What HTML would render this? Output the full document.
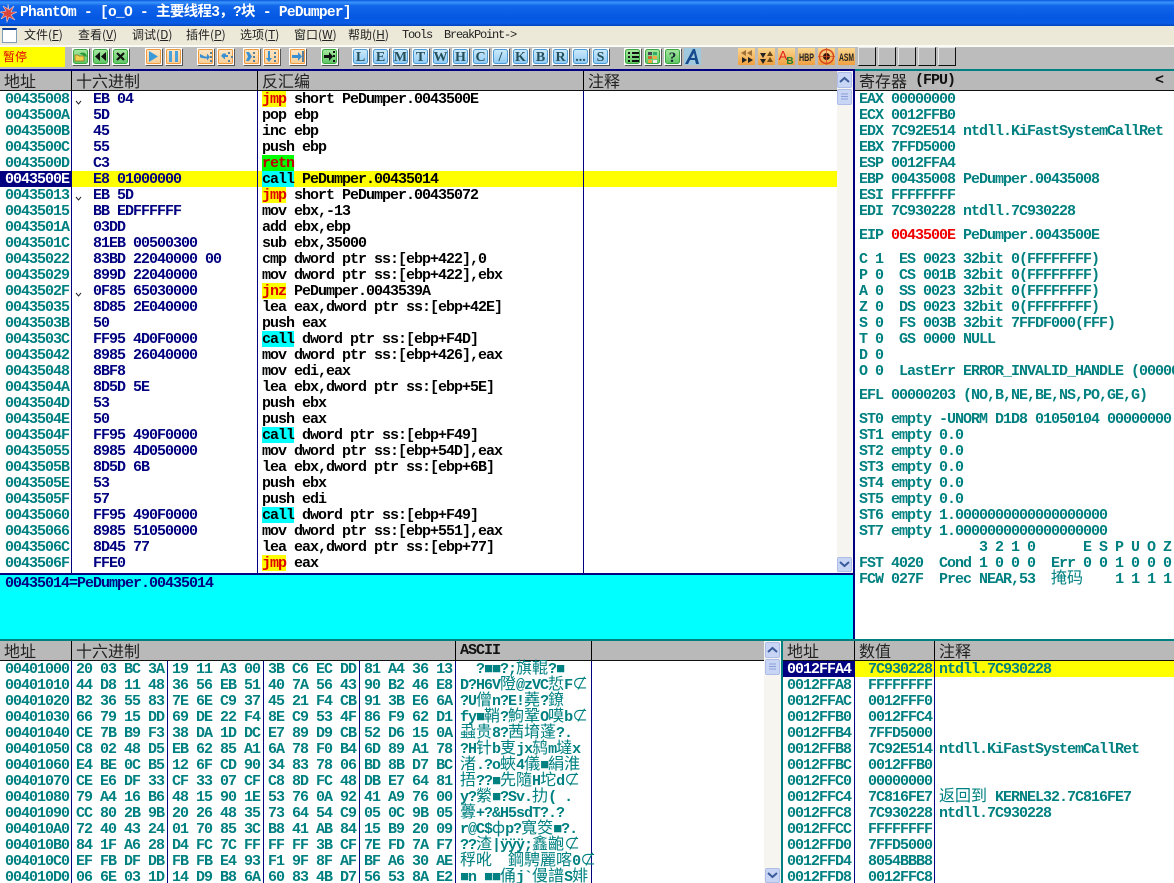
<!DOCTYPE html>
<html><head><meta charset="utf-8"><title>PhantOm</title>
<style>
html,body{margin:0;padding:0;background:#fff;}
#r{position:relative;width:1174px;height:883px;overflow:hidden;background:#fff;font-family:"Liberation Mono","Noto Sans CJK SC",monospace;}
#r div,#r pre,#r svg{position:absolute;margin:0;}
#r pre{margin-top:1px;}
pre{font:bold 15px/16px "Liberation Mono","Noto Sans CJK SC",monospace;letter-spacing:-1px;color:#008080;white-space:pre;}
pre i{font:normal 16px/0 "Noto Sans CJK SC",sans-serif;letter-spacing:0;}
.n{color:#000080}.k{color:#000}
b{display:inline-block;height:15px;line-height:16px;vertical-align:top;font-weight:bold}
.y{background:#ff0;color:#e00000;box-shadow:0 -1px #ff0}.c{background:#0ff;color:#000;box-shadow:0 -1px #0ff}.g{background:#0f0;color:#c00000;box-shadow:0 -1px #0f0}
.h{height:19px;background:#b9b9b9;}
.hd{font:400 16px/18px "Noto Sans CJK SC",sans-serif;color:#222;white-space:pre;}
.hm{font:bold 15px/20px "Liberation Mono",monospace;letter-spacing:-1px;color:#111;white-space:pre;}
.v{width:1px;background:#000080}.vk{width:1px;background:#000}
.m{font:400 12px/18px "Noto Sans CJK SC",sans-serif;color:#222;top:26px;white-space:pre;}
.ml{font:400 12px/18px "Liberation Mono",monospace;letter-spacing:-1.2px;color:#222;top:26px;white-space:pre;}
.sb{background:#c9d5f5;border:1px solid #aebde8;box-sizing:border-box;border-radius:2px;}
</style></head><body><div id="r">

<!-- title -->
<div style="left:0;top:0;width:1174px;height:26px;background:linear-gradient(#0a58e0,#3a95fb 9%,#1166ea 22%,#0357e2 70%,#0a5de6 88%,#0345bd)"></div>
<svg style="left:0;top:3px" width="18" height="20" viewBox="0 0 18 20"><path d="M8 1l1 6 5-4-3 6 6 0-6 3 4 5-6-3-2 5-1-6-5 3 3-5-4-2 6-1-3-5 5 3z" fill="#d8433a" stroke="#f6d0c8" stroke-width=".6"/></svg>
<div style="left:20px;top:4px;font:bold 14.5px/18px 'Liberation Mono','Noto Sans CJK SC',monospace;letter-spacing:-.7px;color:#fff;white-space:pre">PhantOm - [o_O - 主要线程3，?块 - PeDumper]</div>

<!-- menu -->
<div style="left:0;top:26px;width:1174px;height:19px;background:#ece9d8"></div>
<div style="left:0;top:45px;width:1174px;height:2px;background:#fbfaf5"></div>
<div style="left:2px;top:28px;width:13px;height:12px;background:#fff;border:1px solid #7f9db9;border-top:2px solid #0a3a9a"></div>
<div class="m" style="left:24px">文件(<u>F</u>)</div>
<div class="m" style="left:78px">查看(<u>V</u>)</div>
<div class="m" style="left:132px">调试(<u>D</u>)</div>
<div class="m" style="left:186px">插件(<u>P</u>)</div>
<div class="m" style="left:240px">选项(<u>T</u>)</div>
<div class="m" style="left:294px">窗口(<u>W</u>)</div>
<div class="m" style="left:348px">帮助(<u>H</u>)</div>
<div class="ml" style="left:402px">Tools</div>
<div class="ml" style="left:444px">BreakPoint-&gt;</div>

<!-- toolbar -->
<div style="left:0;top:47px;width:1174px;height:22px;background:#bcbcbc"></div>
<div style="left:0;top:47px;width:65px;height:20px;background:#ff0"></div>
<div style="left:3px;top:47px;font:400 12px/19px 'Noto Sans CJK SC',sans-serif;color:#e00000">暂停</div>
<svg style="left:0;top:44px" width="1174" height="26" viewBox="0 44 1174 26">
<defs>
<linearGradient id="gg" x1="0" y1="0" x2="0" y2="1"><stop offset="0" stop-color="#a7e7a0"/><stop offset="1" stop-color="#5fc765"/></linearGradient>
<linearGradient id="og" x1="0" y1="0" x2="0" y2="1"><stop offset="0" stop-color="#fde6c4"/><stop offset="1" stop-color="#f9cf98"/></linearGradient>
<linearGradient id="bg" x1="0" y1="0" x2="0" y2="1"><stop offset="0" stop-color="#cdeafc"/><stop offset="1" stop-color="#8fcaf2"/></linearGradient>
<linearGradient id="dg" x1="0" y1="0" x2="0" y2="1"><stop offset="0" stop-color="#fbd78f"/><stop offset="1" stop-color="#f0a040"/></linearGradient>
<g id="G"><rect x="1" y="49" width="17" height="17" fill="#555"/><rect x="0" y="48" width="17" height="17" fill="#fff"/><rect x="1.5" y="49.5" width="14" height="14" rx="2" fill="url(#gg)" stroke="#3aa83f"/></g>
<g id="O"><rect x="1" y="49" width="17" height="17" fill="#555"/><rect x="0" y="48" width="17" height="17" fill="#fff"/><rect x="1.5" y="49.5" width="14" height="14" rx="1" fill="url(#og)" stroke="#f09a40"/></g>
<g id="B"><rect x="1" y="49" width="17" height="17" fill="#555"/><rect x="0" y="48" width="17" height="17" fill="#fff"/><rect x="1.5" y="49.5" width="14" height="14" rx="2" fill="url(#bg)" stroke="#4a9ad8"/></g>
<g id="D"><rect x="0" y="48" width="17" height="17" fill="url(#dg)"/></g>
<g id="E"><path d="M.5 65V47.500H17" fill="none" stroke="#e6e6e6"/><path d="M17.500 47.500V65.500H.5" fill="none" stroke="#111"/></g>
</defs>
<use href="#G" x="72"/><use href="#G" x="92"/><use href="#G" x="112"/>
<path d="M75 61v-6h3l1 1h5v5z" fill="#f3d24a" stroke="#8a7420" stroke-width=".8"/><path d="M79 54q4-3 7 0l1 3-3-1q-2-2-5-2z" fill="#2c9a3a"/>
<path d="M100 52v9l-5-4.500zM106 52v9l-5-4.500z" fill="#111"/>
<path d="M117 53l7 7M124 53l-7 7" stroke="#111" stroke-width="2.2"/>
<use href="#O" x="145"/><use href="#O" x="165"/>
<path d="M149 51l9 5.500-9 5.500z" fill="#3a9ad8"/><path d="M169 51h3v11h-3zM175 51h3v11h-3z" fill="#4aa2dc"/>
<use href="#O" x="197"/><use href="#O" x="217"/><use href="#O" x="243"/><use href="#O" x="263"/><use href="#O" x="289"/>
<path d="M200 54l5 2.500 2 0v-3l3 3.500-3 3.500v-2l-2 0-5-1z" fill="#3a90d0"/><path d="M210 52h2v2h-2zM210 56h2v2h-2zM210 60h2v2h-2z" fill="#5a7f9a"/>
<path d="M221 56h5v-2.500l-3 0zM221 56l4 3.500v-2.500h3v-2h-3z" fill="#3a90d0"/><path d="M228 52h2v2h-2zM228 60h2v2h-2zM231 56h2v2h-2z" fill="#5a7f9a"/>
<path d="M246 52l3 0 3 4.500-3 4.500h-3l2-4.500z" fill="#3a90d0"/><path d="M253 52h2v2h-2zM253 56h2v2h-2zM253 60h2v2h-2z" fill="#5a7f9a"/>
<path d="M268 51h2v7h2l-3 4-3-4h2z" fill="#3a90d0"/><path d="M274 52h2v2h-2zM274 56h2v2h-2zM274 60h2v2h-2z" fill="#5a7f9a"/>
<path d="M292 55h6v-3l4 4.500-4 4.500v-3h-6z" fill="#3a90d0"/><path d="M302 51h2v11h-2z" fill="#5a7f9a"/>
<use href="#G" x="321"/>
<path d="M324 55h5v-3l4 4.500-4 4.500v-3h-5z" fill="#111"/><path d="M333 51h2v2h-2zM333 55h2v2h-2zM333 60h2v2h-2z" fill="#111"/>
<use href="#B" x="352"/><use href="#B" x="372"/><use href="#B" x="392"/><use href="#B" x="412"/><use href="#B" x="432"/><use href="#B" x="452"/><use href="#B" x="472"/><use href="#B" x="492"/><use href="#B" x="512"/><use href="#B" x="532"/><use href="#B" x="552"/><use href="#B" x="572"/><use href="#B" x="592"/>
<g font-family="Liberation Serif" font-weight="bold" font-size="14" fill="#24505c" text-anchor="middle">
<text x="360.500" y="61">L</text><text x="380.500" y="61">E</text><text x="400.500" y="61">M</text><text x="420.500" y="61">T</text><text x="440.500" y="61">W</text><text x="460.500" y="61">H</text><text x="480.500" y="61">C</text><text x="500.500" y="61">/</text><text x="520.500" y="61">K</text><text x="540.500" y="61">B</text><text x="560.500" y="61">R</text><text x="580.500" y="61">...</text><text x="600.500" y="61">S</text>
</g>
<use href="#G" x="624"/><use href="#G" x="644"/><use href="#G" x="664"/>
<path d="M628 52h2v2h-2zM632 52h7v2h-7zM628 56h2v2h-2zM632 56h7v2h-7zM628 60h2v2h-2zM632 60h7v2h-7z" fill="#111"/>
<rect x="648" y="52" width="4" height="3" fill="#445"/><rect x="653" y="52" width="4" height="3" fill="#3a6"/><rect x="648" y="56" width="4" height="3" fill="#c63"/><rect x="653" y="56" width="4" height="3" fill="#ea4"/><rect x="648" y="60" width="4" height="3" fill="#ea4"/><rect x="653" y="60" width="4" height="3" fill="#eee"/>
<text x="672.500" y="62" font-family="Liberation Serif" font-weight="bold" font-size="15" fill="#123" text-anchor="middle">?</text>
<rect x="684" y="48" width="17" height="17" fill="#9fc8de"/><path d="M685 64l8-15h2l4 15h-3l-1-4h-5l-2 4zM691 58h4l-1-5z" fill="#174a8c" fill-rule="evenodd"/>
<use href="#D" x="738"/><use href="#D" x="758"/><use href="#D" x="778"/><use href="#D" x="798"/><use href="#D" x="818"/><use href="#D" x="838"/>
<path d="M746 50v6l-5-3zM752 50v6l-5-3z" fill="#a0703a"/><path d="M742 57v6l5-3zM748 57v6l5-3z" fill="#222"/>
<path d="M760 53h6l-3 5zM760 59h6l-3 5z" fill="#222"/><path d="M767 56h6l-3-5zM767 62h6l-3-5z" fill="#6a4a1a"/>
<text x="783" y="60" font-family="Liberation Sans" font-size="13" fill="#e02020" text-anchor="middle">A</text><text x="790" y="64" font-family="Liberation Sans" font-size="10" font-weight="bold" fill="#208030" text-anchor="middle">B</text>
<text x="806.500" y="61" font-family="Liberation Sans" font-weight="bold" font-size="11" fill="#222" text-anchor="middle" textLength="15" lengthAdjust="spacingAndGlyphs">HBP</text>
<circle cx="826.500" cy="56.500" r="7" fill="none" stroke="#d84a20" stroke-width="1.500"/><circle cx="826.500" cy="56.500" r="3.500" fill="#301810"/><path d="M818 56.500h17M826.500 48v17" stroke="#d84a20" stroke-width=".8"/>
<text x="846.500" y="61" font-family="Liberation Sans" font-weight="bold" font-size="11" fill="#222" text-anchor="middle" textLength="15" lengthAdjust="spacingAndGlyphs">ASM</text>
<use href="#E" x="858"/><use href="#E" x="878"/><use href="#E" x="898"/><use href="#E" x="918"/><use href="#E" x="938"/>
</svg>

<!-- pane top borders -->
<div style="left:0;top:69px;width:855px;height:2px;background:#000080"></div>
<div style="left:855px;top:69px;width:319px;height:2px;background:#008080"></div>

<!-- headers top -->
<div class="h" style="left:0;top:71px;width:837px"></div>
<div class="h" style="left:855px;top:71px;width:319px"></div>
<div style="left:0;top:90px;width:1174px;height:1px;background:#111"></div>
<div class="hd" style="left:4px;top:71px">地址</div>
<div class="hd" style="left:76px;top:71px">十六进制</div>
<div class="hd" style="left:262px;top:71px">反汇编</div>
<div class="hd" style="left:588px;top:71px">注释</div>
<div class="hd" style="left:859px;top:71px">寄存器</div>
<div class="hm" style="left:915px;top:71px">(FPU)</div>
<div class="hm" style="left:1155px;top:71px">&lt;</div>
<div class="vk" style="left:71px;top:71px;height:19px"></div>
<div class="vk" style="left:257px;top:71px;height:19px"></div>
<div class="vk" style="left:583px;top:71px;height:19px"></div>

<!-- disasm -->
<div style="left:0;top:171px;width:71px;height:16px;background:#000080"></div>
<div style="left:72px;top:171px;width:765px;height:16px;background:#ff0"></div>
<div class="v" style="left:71px;top:91px;height:482px"></div>
<div class="v" style="left:257px;top:91px;height:482px"></div>
<div class="v" style="left:583px;top:91px;height:482px"></div>
<pre style="left:5px;top:91px">00435008
0043500A
0043500B
0043500C
0043500D
<span style="color:#fff">0043500E</span>
00435013
00435015
0043501A
0043501C
00435022
00435029
0043502F
00435035
0043503B
0043503C
00435042
00435048
0043504A
0043504D
0043504E
0043504F
00435055
0043505B
0043505E
0043505F
00435060
00435066
0043506C
0043506F</pre>
<pre class="n" style="left:93px;top:91px">EB 04
5D
45
55
C3
E8 01000000
EB 5D
BB EDFFFFFF
03DD
81EB 00500300
83BD 22040000 00
899D 22040000
0F85 65030000
8D85 2E040000
50
FF95 4D0F0000
8985 26040000
8BF8
8D5D 5E
53
50
FF95 490F0000
8985 4D050000
8D5D 6B
53
57
FF95 490F0000
8985 51050000
8D45 77
FFE0</pre>
<svg style="left:75px;top:100px" width="8" height="6"><path d="M1 1l2.500 3 2.500-3" fill="none" stroke="#223" /></svg>
<svg style="left:75px;top:196px" width="8" height="6"><path d="M1 1l2.500 3 2.500-3" fill="none" stroke="#223" /></svg>
<svg style="left:75px;top:292px" width="8" height="6"><path d="M1 1l2.500 3 2.500-3" fill="none" stroke="#223" /></svg>
<pre class="k" style="left:262px;top:91px"><b class="y">jmp</b> short PeDumper.0043500E
pop ebp
inc ebp
push ebp
<b class="g">retn</b>
<b class="c">call</b> PeDumper.00435014
<b class="y">jmp</b> short PeDumper.00435072
mov ebx,-13
add ebx,ebp
sub ebx,35000
cmp dword ptr ss:[ebp+422],0
mov dword ptr ss:[ebp+422],ebx
<b class="y">jnz</b> PeDumper.0043539A
lea eax,dword ptr ss:[ebp+42E]
push eax
<b class="c">call</b> dword ptr ss:[ebp+F4D]
mov dword ptr ss:[ebp+426],eax
mov edi,eax
lea ebx,dword ptr ss:[ebp+5E]
push ebx
push eax
<b class="c">call</b> dword ptr ss:[ebp+F49]
mov dword ptr ss:[ebp+54D],eax
lea ebx,dword ptr ss:[ebp+6B]
push ebx
push edi
<b class="c">call</b> dword ptr ss:[ebp+F49]
mov dword ptr ss:[ebp+551],eax
lea eax,dword ptr ss:[ebp+77]
<b class="y">jmp</b> eax</pre>

<!-- disasm scrollbar -->
<div style="left:837px;top:71px;width:16px;height:502px;background:#f6f5ef"></div>
<div class="sb" style="left:837px;top:72px;width:15px;height:16px"></div>
<div class="sb" style="left:837px;top:89px;width:15px;height:16px"></div>
<div class="sb" style="left:837px;top:557px;width:15px;height:15px"></div>
<svg style="left:837px;top:72px" width="15" height="16"><path d="M3 10l4.500-4 4.500 4" fill="none" stroke="#3a5a9a" stroke-width="2"/></svg>
<svg style="left:837px;top:89px" width="15" height="16"><path d="M4 5h7M4 7.500h7M4 10h7" stroke="#8a9fd8"/></svg>
<svg style="left:837px;top:557px" width="15" height="15"><path d="M3 5l4.500 4 4.500-4" fill="none" stroke="#3a5a9a" stroke-width="2"/></svg>
<div style="left:853px;top:69px;width:2px;height:572px;background:#000080"></div>

<!-- info pane -->
<div style="left:0;top:573px;width:854px;height:2px;background:#000080"></div>
<div style="left:0;top:575px;width:853px;height:64px;background:#0ff"></div>
<pre class="n" style="left:5px;top:575px">00435014=PeDumper.00435014</pre>

<!-- registers -->
<pre style="left:859px;top:91px">EAX 00000000
ECX 0012FFB0
EDX 7C92E514 ntdll.KiFastSystemCallRet
EBX 7FFD5000
ESP 0012FFA4
EBP 00435008 PeDumper.00435008
ESI FFFFFFFF
EDI 7C930228 ntdll.7C930228</pre>
<pre style="left:859px;top:227px">EIP <span style="color:#f00000">0043500E</span> PeDumper.0043500E</pre>
<pre style="left:859px;top:251px">C 1  ES 0023 32bit 0(FFFFFFFF)
P 0  CS 001B 32bit 0(FFFFFFFF)
A 0  SS 0023 32bit 0(FFFFFFFF)
Z 0  DS 0023 32bit 0(FFFFFFFF)
S 0  FS 003B 32bit 7FFDF000(FFF)
T 0  GS 0000 NULL
D 0
O 0  LastErr ERROR_INVALID_HANDLE (00000006)</pre>
<pre style="left:859px;top:387px">EFL 00000203 (NO,B,NE,BE,NS,PO,GE,G)</pre>
<pre style="left:859px;top:411px">ST0 empty -UNORM D1D8 01050104 00000000
ST1 empty 0.0
ST2 empty 0.0
ST3 empty 0.0
ST4 empty 0.0
ST5 empty 0.0
ST6 empty 1.0000000000000000000
ST7 empty 1.0000000000000000000
               3 2 1 0      E S P U O Z
FST 4020  Cond 1 0 0 0  Err 0 0 1 0 0 0
FCW 027F  Prec NEAR,53  <i>掩码</i>    1 1 1 1</pre>

<!-- bottom panes -->
<div style="left:0;top:639px;width:1174px;height:2px;background:#008080"></div>
<div class="h" style="left:0;top:641px;width:764px"></div>
<div class="h" style="left:783px;top:641px;width:391px"></div>
<div style="left:0;top:660px;width:1174px;height:1px;background:#111"></div>
<div class="hd" style="left:4px;top:641px">地址</div>
<div class="hd" style="left:76px;top:641px">十六进制</div>
<div class="hm" style="left:460px;top:641px">ASCII</div>
<div class="hd" style="left:787px;top:641px">地址</div>
<div class="hd" style="left:859px;top:641px">数值</div>
<div class="hd" style="left:939px;top:641px">注释</div>
<div class="vk" style="left:71px;top:641px;height:19px"></div>
<div class="vk" style="left:455px;top:641px;height:19px"></div>
<div class="vk" style="left:591px;top:641px;height:19px"></div>
<div class="vk" style="left:854px;top:641px;height:19px"></div>
<div class="vk" style="left:934px;top:641px;height:19px"></div>
<div class="v" style="left:71px;top:661px;height:222px"></div>
<div class="v" style="left:167px;top:661px;height:222px"></div>
<div class="v" style="left:263px;top:661px;height:222px"></div>
<div class="v" style="left:359px;top:661px;height:222px"></div>
<div class="v" style="left:455px;top:661px;height:222px"></div>
<div class="v" style="left:591px;top:661px;height:222px"></div>
<pre style="left:5px;top:661px">00401000
00401010
00401020
00401030
00401040
00401050
00401060
00401070
00401080
00401090
004010A0
004010B0
004010C0
004010D0</pre>
<pre style="left:76px;top:661px">20 03 BC 3A 19 11 A3 00 3B C6 EC DD 81 A4 36 13
44 D8 11 48 36 56 EB 51 40 7A 56 43 90 B2 46 E8
B2 36 55 83 7E 6E C9 37 45 21 F4 CB 91 3B E6 6A
66 79 15 DD 69 DE 22 F4 8E C9 53 4F 86 F9 62 D1
CE 7B B9 F3 38 DA 1D DC E7 89 D9 CB 52 D6 15 0A
C8 02 48 D5 EB 62 85 A1 6A 78 F0 B4 6D 89 A1 78
E4 BE 0C B5 12 6F CD 90 34 83 78 06 BD 8B D7 BC
CE E6 DF 33 CF 33 07 CF C8 8D FC 48 DB E7 64 81
79 A4 16 B6 48 15 90 1E 53 76 0A 92 41 A9 76 00
CC 80 2B 9B 20 26 48 35 73 64 54 C9 05 0C 9B 05
72 40 43 24 01 70 85 3C B8 41 AB 84 15 B9 20 09
84 1F A6 28 D4 FC 7C FF FF FF 3B CF 7E FD 7A F7
EF FB DF DB FB FB E4 93 F1 9F 8F AF BF A6 30 AE
06 6E 03 1D 14 D9 B8 6A 60 83 4B D7 56 53 8A E2</pre>
<pre style="left:460px;top:661px">  ?■■?;<i>旗輥</i>?■
D?H6V<i>隥</i>@zVC<i>悊</i>F<i>⊄</i>
?U<i>僧</i>n?E!<i>蕘</i>?<i>鐐</i>
fy■<i>鞘</i>?<i>鮈鞏</i>O<i>嗼</i>b<i>⊄</i>
<i>蝨贵</i>8?<i>茜堉蓬</i>?.
?H<i>针</i>b<i>叓</i>jx<i>鸫</i>m<i>墶</i>x
<i>渚</i>.?o<i>蛺</i>4<i>儀</i>■<i>絹淮</i>
<i>捂</i>??■<i>先隨</i>H<i>坨</i>d<i>⊄</i>
y?<i>縈</i>■?Sv.<i>扐</i>( .
<i>虋</i>+?&amp;H5sdT?.?
r@C$<i>ф</i>p?<i>寬筊</i>■?.
??<i>渣</i>|ÿÿÿ;<i>鑫齙</i><i>⊄</i>
<i>稃吪</i>  <i>鋼騁麗</i><i>喀</i>0<i>⊄</i>
■n ■■<i>俑</i>j`<i>僈譜</i>S<i>婔</i></pre>

<!-- dump scrollbar -->
<div style="left:764px;top:641px;width:17px;height:242px;background:#f6f5ef"></div>
<div class="sb" style="left:765px;top:642px;width:15px;height:16px"></div>
<div class="sb" style="left:765px;top:659px;width:15px;height:16px"></div>
<div class="sb" style="left:765px;top:868px;width:15px;height:15px"></div>
<svg style="left:765px;top:642px" width="15" height="16"><path d="M3 10l4.500-4 4.500 4" fill="none" stroke="#3a5a9a" stroke-width="2"/></svg>
<svg style="left:765px;top:659px" width="15" height="16"><path d="M4 5h7M4 7.500h7M4 10h7" stroke="#8a9fd8"/></svg>
<svg style="left:765px;top:868px" width="15" height="15"><path d="M3 5l4.500 4 4.500-4" fill="none" stroke="#3a5a9a" stroke-width="2"/></svg>
<div style="left:781px;top:641px;width:2px;height:242px;background:#008080"></div>

<!-- stack -->
<div style="left:783px;top:661px;width:71px;height:16px;background:#000080"></div>
<div style="left:855px;top:661px;width:319px;height:16px;background:#ff0"></div>
<div class="v" style="left:854px;top:661px;height:222px"></div>
<div class="v" style="left:934px;top:661px;height:222px"></div>
<pre style="left:787px;top:661px"><span style="color:#fff">0012FFA4</span>
0012FFA8
0012FFAC
0012FFB0
0012FFB4
0012FFB8
0012FFBC
0012FFC0
0012FFC4
0012FFC8
0012FFCC
0012FFD0
0012FFD4
0012FFD8</pre>
<pre style="left:868px;top:661px">7C930228
FFFFFFFF
0012FFF0
0012FFC4
7FFD5000
7C92E514
0012FFB0
00000000
7C816FE7
7C930228
FFFFFFFF
7FFD5000
8054BBB8
0012FFC8</pre>
<pre style="left:939px;top:661px">ntdll.7C930228




ntdll.KiFastSystemCallRet


<i>返回到</i> KERNEL32.7C816FE7
ntdll.7C930228</pre>
</div></body></html>
